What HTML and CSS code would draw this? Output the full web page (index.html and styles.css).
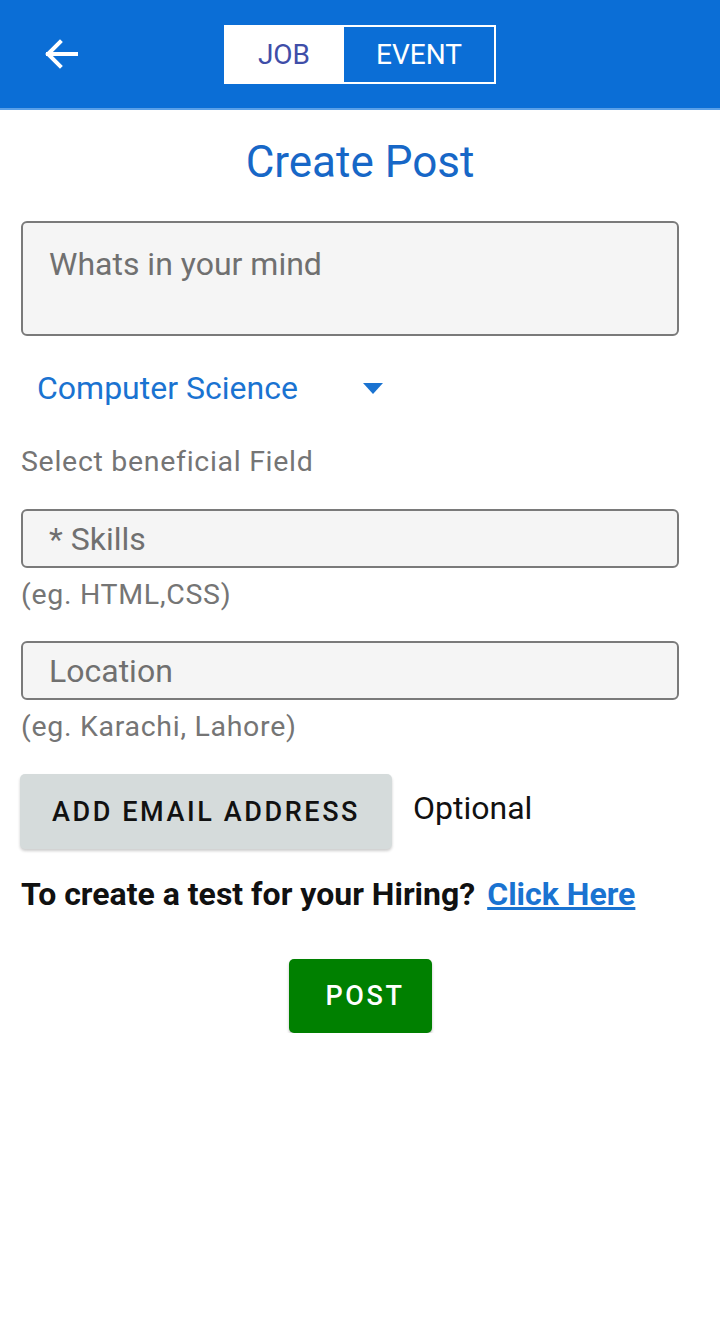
FILE: index.html
```html
<!DOCTYPE html>
<html>
<head>
<meta charset="utf-8">
<link rel="stylesheet" href="styles.css">
</head>
<body>
<header class="topbar">
  <button class="back" aria-label="Back">
    <svg width="34" height="30" viewBox="0 0 34 30"><path d="M32 15H4M16 3L4 15l12 12" fill="none" stroke="#fff" stroke-width="4" stroke-linecap="square"/></svg>
  </button>
  <div class="segment">
    <span class="seg seg-active">JOB</span>
    <span class="seg">EVENT</span>
  </div>
</header>
<main class="content">
  <h1 class="title">Create Post</h1>
  <div class="field field-tall"><span class="ph">Whats in your mind</span></div>
  <div class="picker">
    <span class="picker-text">Computer Science</span>
    <svg class="caret" width="20" height="11" viewBox="0 0 20 11"><path d="M0 0h20L10 11z" fill="#1a73d1"/></svg>
  </div>
  <p class="hint hint-select">Select beneficial Field</p>
  <div class="field field-skills"><span class="ph">* Skills</span></div>
  <p class="hint">(eg. HTML,CSS)</p>
  <div class="field field-loc"><span class="ph">Location</span></div>
  <p class="hint">(eg. Karachi, Lahore)</p>
  <div class="email-row">
    <button class="btn-email">ADD EMAIL ADDRESS</button>
    <span class="optional">Optional</span>
  </div>
  <p class="test-line">To create a test for your Hiring? <a class="link">Click Here</a></p>
  <div class="post-wrap"><button class="btn-post">POST</button></div>
</main>
</body>
</html>
```
FILE: styles.css
```css
* { box-sizing: border-box; }
html, body { margin: 0; padding: 0; background: #fff; }
body { font-family: Roboto, "Noto Sans", "Liberation Sans", sans-serif; width: 720px; }
.topbar {
  height: 110px;
  background: #0b6ed6;
  border-bottom: 2px solid #5aa0e8;
  display: flex;
  align-items: center;
  padding-left: 44px;
}
.back { background: none; border: 0; padding: 0; width: 34px; height: 30px; display: flex; }
.segment {
  display: flex;
  margin-left: 146px;
  height: 59px;
  border: 2px solid #fff;
}
.seg {
  display: flex; align-items: center; justify-content: center;
  color: #fff; font-size: 28px; font-family: Roboto, "Noto Sans", sans-serif;
  width: 150px;
}
.seg-active { background: #fff; color: #3f4ea8; width: 118px; padding-right: 2px; }
.content { padding: 0 41px 0 21px; display: flex; flex-direction: column; }
.title {
  margin: 28px 0 0; text-align: center; font-weight: 400; font-size: 44px;
  color: #1767c7; line-height: 48px; padding-left: 20px;
}
.field {
  height: 59px;
  background: #f5f5f5;
  border: 2px solid #7a7a7a;
  border-radius: 6px;
  padding: 0 26px;
  display: flex; align-items: center;
}
.field-tall { height: 115px; align-items: flex-start; padding-top: 22px; margin-top: 35px; }
.ph { font-size: 32px; color: #707070; line-height: 38px; }
.picker { display: flex; align-items: center; margin-top: 33px; padding-left: 16px; height: 38px; }
.picker-text { font-size: 32px; color: #1a73d1; }
.caret { margin-left: 65px; }
.hint { margin: 10px 0 0; font-size: 28.5px; color: #757575; letter-spacing: 0.7px; line-height: 34px; }
.hint-select { margin-top: 38px; }
.field-skills { margin-top: 30px; }
.field-loc { margin-top: 29px; }
.email-row { display: flex; align-items: center; margin-top: 30px; margin-left: -1px; }
.btn-email {
  width: 372px; height: 75px;
  background: #d5dbdb; border: 0; border-radius: 5px;
  box-shadow: 0 2px 3px rgba(0,0,0,0.2);
  font-family: Roboto, sans-serif; font-size: 27px; font-weight: 500;
  letter-spacing: 2.6px; color: #111;
}
.optional { font-size: 32px; color: #111; margin-left: 21px; margin-top: -8px; }
.test-line { margin: 25px 0 0; font-size: 32px; font-weight: 700; color: #111; line-height: 40px; letter-spacing: 0; }
.link { color: #1a73d1; text-decoration: underline; margin-left: 4px; }
.post-wrap { display: flex; justify-content: center; margin-top: 45px; padding-left: 20px; }
.btn-post {
  width: 143px; height: 74px; background: #008000; border: 0; border-radius: 5px;
  box-shadow: 0 2px 3px rgba(0,0,0,0.25);
  color: #fff; font-family: Roboto, sans-serif; font-size: 27px; font-weight: 500; letter-spacing: 2.6px; padding: 0 0 0 10px;
}
```
